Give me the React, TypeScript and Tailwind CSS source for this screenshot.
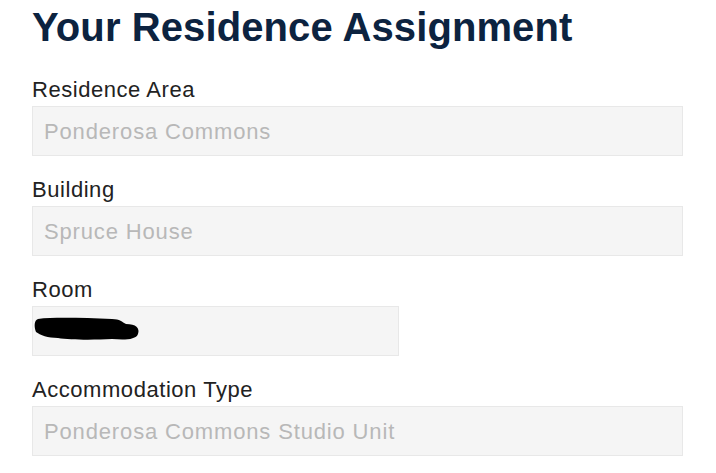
export default function App() {
  const fields = [
    { label: "Residence Area", value: "Ponderosa Commons", wide: true },
    { label: "Building", value: "Spruce House", wide: true },
    { label: "Room", value: "", wide: false, redacted: true },
    { label: "Accommodation Type", value: "Ponderosa Commons Studio Unit", wide: true },
  ];

  return (
    <div className="min-h-[473px] w-[716px] bg-white px-[32px] pt-[3px] font-['Liberation_Sans',Arial,sans-serif]">
      <h1 className="text-[40px] leading-[48px] font-bold text-[#0c2340] tracking-[0.1px]">
        Your Residence Assignment
      </h1>
      <div className="mt-[27px] flex flex-col gap-[22px]">
        {fields.map((f) => (
          <div key={f.label} className="flex flex-col gap-[4px]">
            <label className="text-[22px] leading-[24px] text-[#222] tracking-[0.55px]">{f.label}</label>
            <div
              className={`relative flex h-[50px] items-center border border-[#e8e8e8] bg-[#f5f5f5] pl-[11px] text-[22px] tracking-[0.85px] text-[#b8b8b8] ${
                f.wide ? "w-[651px]" : "w-[367px]"
              }`}
            >
              {f.value}
              {f.redacted && (
                <svg className="absolute left-[1px] top-[10px]" width="106" height="26" viewBox="0 0 106 26">
                  <path
                    d="M4 2 C20 0 50 1 78 2 C86 2 88 5 92 7 C102 7 106 11 104 17 C102 23 90 23 78 22 C60 23 36 23 24 21 C14 21 6 18 2 15 C0 10 0 3 4 2 Z"
                    fill="#000"
                  />
                </svg>
              )}
            </div>
          </div>
        ))}
      </div>
    </div>
  );
}
